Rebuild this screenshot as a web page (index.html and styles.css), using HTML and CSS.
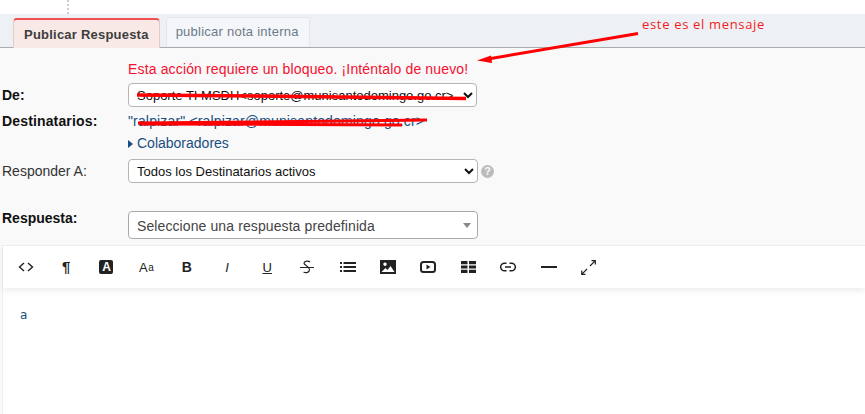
FILE: index.html
```html
<!DOCTYPE html>
<html lang="es">
<head>
  <meta charset="UTF-8">
  <title>Publicar Respuesta</title>
  <link rel="stylesheet" href="styles.css">
</head>
<body>
<div class="top-strip"><span class="dots"></span></div>

<ul class="tabs">
  <li class="tab active">Publicar Respuesta</li>
  <li class="tab">publicar nota interna</li>
</ul>

<div class="panel">
  <div class="error-msg">Esta acción requiere un bloqueo. ¡Inténtalo de nuevo!</div>

  <div class="row row-de">
    <label class="lbl bold">De:</label>
    <select class="field">
      <option>Soporte TI MSDH&lt;soporte@munisantodomingo.go.cr&gt;</option>
    </select>
  </div>

  <div class="row row-dest">
    <label class="lbl bold">Destinatarios:</label>
    <span class="link-text">"ralpizar" &lt;ralpizar@munisantodomingo.go.cr&gt;</span>
  </div>

  <div class="row row-colab">
    <span class="lbl"></span>
    <span class="link-text"><span class="caret"></span>Colaboradores</span>
  </div>

  <div class="row row-resp">
    <label class="lbl">Responder A:</label>
    <select class="field field-wide">
      <option>Todos los Destinatarios activos</option>
    </select>
    <span class="help">?</span>
  </div>

  <div class="row row-canned">
    <label class="lbl bold">Respuesta:</label>
    <div class="fake-select">
      Seleccione una respuesta predefinida
      <span class="fake-arrow"></span>
    </div>
  </div>

  <div class="editor">
    <div class="toolbar">
      <span class="tool"><svg width="16" height="12" viewBox="0 0 16 12"><path d="M6 2 1.500 6 6 10M10 2l4.500 4L10 10" fill="none" stroke="#222" stroke-width="1.400"/></svg></span>
      <span class="tool tool-txt para">¶</span>
      <span class="tool"><span class="style-a">A</span></span>
      <span class="tool tool-txt size">A<small>a</small></span>
      <span class="tool tool-txt b">B</span>
      <span class="tool tool-txt i">I</span>
      <span class="tool tool-txt u">U</span>
      <span class="tool"><svg width="14" height="14" viewBox="0 0 14 14"><path d="M10 2.200C9 .8 4.500.5 4 3c-.4 2 5.500 3 5.500 6.500 0 3-3.500 4-6 2.500" fill="none" stroke="#222" stroke-width="1.200"/><path d="M0 7h14v1H0z" fill="#222"/></svg></span>
      <span class="tool"><svg width="16" height="12" viewBox="0 0 16 12"><path d="M0 1h2v2H0zM0 5h2v2H0zM0 9h2v2H0zM3.500 1H16v2H3.500zM3.500 5H16v2H3.500zM3.500 9H16v2H3.500z" fill="#222"/></svg></span>
      <span class="tool"><svg width="16" height="14" viewBox="0 0 16 14"><path fill-rule="evenodd" d="M0 0h16v14H0zM5 2.500a1.700 1.700 0 1 0 .01 0zM1.500 12h13L10.500 6 7.500 10 5.500 8z" fill="#222"/></svg></span>
      <span class="tool"><svg width="16" height="12" viewBox="0 0 16 12"><rect x="1" y="1" width="14" height="10" rx="2.500" fill="none" stroke="#222" stroke-width="2"/><path d="M6.500 3.500v5L10.500 6z" fill="#222"/></svg></span>
      <span class="tool"><svg width="15" height="12" viewBox="0 0 15 12"><path d="M0 0h6.500v3.300H0zM8 0h7v3.300H8zM0 4.400h6.500v3.200H0zM8 4.400h7v3.200H8zM0 8.700h6.500V12H0zM8 8.700h7V12H8z" fill="#222"/></svg></span>
      <span class="tool"><svg width="16" height="10" viewBox="0 0 16 10"><path d="M6.500 1.200H4.500a3.800 3.800 0 0 0 0 7.600h2M9.500 1.200h2a3.800 3.800 0 0 1 0 7.600h-2M5 5h6" fill="none" stroke="#222" stroke-width="1.500"/></svg></span>
      <span class="tool"><svg width="16" height="3" viewBox="0 0 16 3"><path d="M0 0h16v2H0z" fill="#222"/></svg></span>
      <span class="tool"><svg width="15" height="15" viewBox="0 0 15 15"><path d="M10.500.7h3.800v3.800M14.300.7 9 6M4.500 14.300H.7v-3.800M.7 14.300 6 9" fill="none" stroke="#222" stroke-width="1.200"/></svg></span>
    </div>
    <div class="editor-body">a</div>
  </div>
</div>

<!-- anotaciones rojas encima de la captura -->
<div class="note">este es el mensaje</div>
<svg class="marks" width="865" height="414" viewBox="0 0 865 414">
  <path d="M638 33.500 488 59" stroke="#f00" stroke-width="3" fill="none"/>
  <path d="M477 60.500 491 55.500 492 63z" fill="#f00"/>
  <path d="M137 95 300 96.500 466 98.500" stroke="#f00" stroke-width="3.500" fill="none"/>
  <path d="M138 123 300 121.500 427 120" stroke="#f00" stroke-width="3" fill="none"/>
  <path d="M140 124 300 124.500 402 125" stroke="#f00" stroke-width="3" fill="none"/>
</svg>
</body>
</html>
```

FILE: styles.css
```css
* {
    box-sizing: border-box;
}

html, body {
    height: 100%;
}

body {
    margin: 0;
    height: 414px;
    overflow: hidden;
    background-color: #fff;
    color: #222;
    font-family: "Liberation Sans", Arial, sans-serif;
    font-size: 14px;
}

.top-strip {
    height: 14px;
    padding-left: 67px;
}

.dots {
    display: block;
    width: 2px;
    height: 14px;
    background: repeating-linear-gradient(to bottom, #ccc 0, #ccc 2px, transparent 2px, transparent 4px);
}

/* tabs */
.tabs {
    display: flex;
    align-items: flex-start;
    gap: 6px;
    height: 34px;
    margin: 0;
    padding: 3px 0 0 13px;
    list-style: none;
    background-color: #edf1f5;
    border-bottom: 1px solid #aaa;
}

.tab {
    height: 29px;
    padding: 0 10px 0 9px;
    line-height: 28px;
    font-size: 13px;
    font-weight: 400;
    letter-spacing: 0.25px;
    color: #6d7b8b;
    background-color: #f4f6f9;
    border: 1px solid #e3e7ec;
    border-bottom: 0;
    border-radius: 4px 4px 0 0;
}

.tab.active {
    height: 30px;
    margin-top: 1px;
    padding: 0 10px;
    line-height: 30px;
    font-weight: 700;
    letter-spacing: 0.22px;
    color: #3d3d3d;
    background-color: #f8e9e7;
    border: 1px solid #e4c9c6;
    border-top: 2px solid #f25050;
    border-bottom: 0;
}

/* form */
.panel {
    height: 366px;
    padding-left: 2px;
    background-color: #f9f9f9;
}

.error-msg {
    height: 35px;
    padding: 13px 0 0 126px;
    line-height: 16px;
    font-size: 14px;
    letter-spacing: 0.15px;
    color: #f5102f;
}

.row {
    display: flex;
    align-items: center;
}

.lbl {
    flex: 0 0 126px;
    font-size: 14px;
}

.bold {
    font-weight: 700;
    color: #111;
}

.row-dest .lbl {
    letter-spacing: 0.15px;
}

.row-de {
    height: 24px;
}

.row-dest {
    height: 26px;
    padding-top: 1px;
}

.row-dest .link-text {
    letter-spacing: 0.15px;
}

.row-colab {
    height: 20px;
}

.row-resp {
    height: 24px;
    margin-top: 6px;
}

.row-canned {
    align-items: flex-start;
    height: 28px;
    margin-top: 28px;
}

.row-canned .lbl {
    line-height: 15px;
}

.row-resp .lbl {
    color: #333;
}

.field {
    width: 349px;
    height: 24px;
    padding: 0 4px;
    font-family: "Liberation Sans", Arial, sans-serif;
    font-size: 13px;
    color: #111;
    background-color: #fff;
    border: 1px solid #b5b5b5;
    border-radius: 4px;
}

.field-wide {
    width: 350px;
}

.link-text {
    font-size: 14px;
    color: #184e81;
}

.caret {
    display: inline-block;
    width: 0;
    height: 0;
    margin-right: 4px;
    border-top: 4px solid transparent;
    border-bottom: 4px solid transparent;
    border-left: 5px solid #184e81;
}

.help {
    width: 13px;
    height: 13px;
    margin-left: 3px;
    border-radius: 50%;
    background-color: #bbb;
    color: #f9f9f9;
    font-size: 11px;
    font-weight: 700;
    line-height: 13px;
    text-align: center;
}

.fake-select {
    position: relative;
    width: 350px;
    height: 28px;
    padding-left: 8px;
    line-height: 28px;
    font-size: 14px;
    letter-spacing: 0.1px;
    color: #444;
    background-color: #fff;
    border: 1px solid #aaa;
    border-radius: 4px;
}

.fake-arrow {
    position: absolute;
    top: 11px;
    right: 6px;
    width: 0;
    height: 0;
    border-left: 4px solid transparent;
    border-right: 4px solid transparent;
    border-top: 5px solid #888;
}

/* editor */
.editor {
    margin-top: 6px;
    margin-left: 0;
    height: 171px;
    background-color: #fff;
    border-left: 1px solid #eee;
    border-top: 1px solid #eee;
}

.toolbar {
    display: flex;
    align-items: center;
    height: 42px;
    padding-left: 3px;
    box-shadow: 0 3px 6px rgba(0, 0, 0, 0.07);
}

.tool {
    display: flex;
    flex: 0 0 40.2px;
    align-items: center;
    justify-content: center;
    color: #222;
}

.tool-txt {
    font-size: 14px;
}

.para {
    margin-bottom: 2px;
    font-weight: 700;
    font-size: 15px;
}

.style-a {
    display: block;
    width: 14px;
    height: 14px;
    border-radius: 2px;
    background-color: #222;
    color: #fff;
    font-size: 12px;
    font-weight: 700;
    line-height: 14px;
    text-align: center;
}

.size {
    font-size: 13px;
    letter-spacing: 0.5px;
}

.size small {
    font-size: 10px;
}

.b {
    font-weight: 700;
}

.i {
    font-style: italic;
    font-size: 13px;
}

.u {
    text-decoration: underline;
    font-size: 13px;
}

.editor-body {
    padding: 19px 0 0 17px;
    line-height: 16px;
    font-family: "DejaVu Sans", sans-serif;
    font-size: 12px;
    color: #184e81;
}

/* annotations */
.note {
    position: absolute;
    top: 15px;
    left: 642px;
    font-family: "Open Sans", sans-serif;
    font-size: 13px;
    letter-spacing: 0.67px;
    color: #f01c1c;
}

.marks {
    position: absolute;
    top: 0;
    left: 0;
    pointer-events: none;
}
```
